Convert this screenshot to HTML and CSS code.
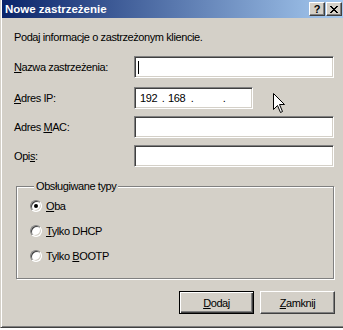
FILE: index.html
```html
<!DOCTYPE html>
<html lang="pl">
<head>
    <meta charset="UTF-8">
    <title>Nowe zastrzeżenie</title>
    <link rel="stylesheet" href="styles.css">
</head>
<body>
    <div class="window">
        <div class="titlebar">
            <span class="title">Nowe zastrzeżenie</span>
            <div class="title-buttons">
                <span class="tbtn help">?</span>
                <span class="tbtn close">
                    <svg width="8" height="7" viewBox="0 0 8 7"><path d="M0 0h2v1h1v1h2V1h1V0h2v1H7v1H6v1H5v1h1v1h1v1h1v1H6V6H5V5H3v1H2v1H0V6h1V5h1V4h1V3H2V2H1V1H0z" fill="#000"/></svg>
                </span>
            </div>
        </div>

        <div class="content">
            <p class="intro">Podaj informacje o zastrzeżonym kliencie.</p>

            <div class="form-row first">
                <label><u>N</u>azwa zastrzeżenia:</label>
                <div class="field wide"><span class="caret"></span></div>
            </div>
            <div class="form-row">
                <label><u>A</u>dres IP:</label>
                <div class="field ip">
                    <span class="oct o1">192</span><span class="dot">.</span><span class="oct o2">168</span><span class="dot">.</span><span class="oct o3"></span><span class="dot">.</span>
                </div>
            </div>
            <div class="form-row">
                <label>Adres <u>M</u>AC:</label>
                <div class="field wide"></div>
            </div>
            <div class="form-row">
                <label>Opi<u>s</u>:</label>
                <div class="field wide"></div>
            </div>

            <fieldset class="group">
                <legend>Obsługiwane typy</legend>
                <div class="radio"><span class="mark checked"></span><span><u>O</u>ba</span></div>
                <div class="radio"><span class="mark"></span><span><u>T</u>ylko DHCP</span></div>
                <div class="radio"><span class="mark"></span><span>Tylko <u>B</u>OOTP</span></div>
            </fieldset>

            <div class="actions">
                <button class="btn default"><u>D</u>odaj</button>
                <button class="btn"><u>Z</u>amknij</button>
            </div>
        </div>

        <svg class="pointer" width="13" height="21" viewBox="0 0 13 21">
            <path d="M0.5 0.5 L0.5 16.5 L4.5 12.5 L7.5 19.5 L9.5 18.5 L6.5 11.5 L11.5 11.5 Z" fill="#fff" stroke="#000" stroke-width="1"/>
        </svg>
    </div>
</body>
</html>
```

FILE: styles.css
```css
body {
    margin: 0;
    background-color: #fff;
    font-family: "Liberation Sans", Arial, sans-serif;
    font-size: 11px;
    letter-spacing: -0.4px;
    color: #000;
}

.window {
    position: relative;
    box-sizing: border-box;
    width: 343px;
    height: 328px;
    background-color: #d4d0c8;
    border-left: 1px solid #d4d0c8;
    border-bottom: 1px solid #404040;
    box-shadow: inset 1px 0 0 #fff, inset 0 -1px 0 #808080;
    overflow: hidden;
}

.titlebar {
    display: flex;
    align-items: center;
    justify-content: space-between;
    height: 18px;
    margin-left: 1px;
    padding: 0 1px 0 3px;
    background: linear-gradient(to right, #0a246a, #a6caf0);
}

.title {
    color: #fff;
    font-weight: bold;
    font-size: 11.5px;
    letter-spacing: 0;
}

.title-buttons {
    display: flex;
    gap: 1px;
}

.tbtn {
    box-sizing: border-box;
    display: flex;
    align-items: center;
    justify-content: center;
    width: 16px;
    height: 14px;
    background-color: #d4d0c8;
    border: 1px solid;
    border-color: #fff #404040 #404040 #fff;
    box-shadow: inset -1px -1px 0 #808080;
}

.help {
    font-weight: bold;
    font-size: 11px;
    letter-spacing: 0;
    line-height: 12px;
}

.content {
    padding: 0 9px 0 13px;
}

.intro {
    margin: 13px 0 12px;
    line-height: 13px;
}

.form-row {
    display: flex;
    align-items: center;
    margin-bottom: 7px;
}

.form-row.first {
    margin-bottom: 9px;
}

.form-row label {
    width: 120px;
}

.field {
    box-sizing: border-box;
    height: 22px;
    background-color: #fff;
    border: 1px solid;
    border-color: #808080 #fff #fff #808080;
    box-shadow: inset 1px 1px 0 #404040, inset -1px -1px 0 #d4d0c8;
    display: flex;
    align-items: center;
}

.field.wide {
    width: 200px;
}

.field.ip {
    width: 119px;
    padding-left: 5px;
}

.caret {
    width: 1px;
    height: 13px;
    margin-left: 3px;
    background-color: #000;
}

.oct.o1 { width: 21px; }
.oct.o2 { width: 22px; padding-left: 3px; }
.oct.o3 { width: 28px; }

.dot {
    width: 4px;
    text-align: center;
}

.group {
    margin: 13px 0 0 2px;
    padding: 6px 0 16px 13px;
    border: 1px solid #808080;
    box-shadow: inset 1px 1px 0 #fff, 1px 1px 0 #fff;
}

.group legend {
    margin-left: 4px;
    padding: 0 2px;
    line-height: 13px;
    background-color: #d4d0c8;
}

.radio {
    display: flex;
    align-items: center;
    gap: 4px;
    height: 13px;
    margin-bottom: 12px;
}

.radio:last-child {
    margin-bottom: 0;
}

.mark {
    position: relative;
    box-sizing: border-box;
    width: 12px;
    height: 12px;
    border-radius: 50%;
    background-color: #fff;
    border: 1px solid;
    border-color: #808080 #fff #fff #808080;
    box-shadow: inset 1px 1px 0 #404040, inset -1px -1px 0 #d4d0c8;
}

.mark.checked::after {
    content: "";
    position: absolute;
    left: 3px;
    top: 3px;
    width: 4px;
    height: 4px;
    border-radius: 50%;
    background-color: #000;
}

.actions {
    display: flex;
    justify-content: flex-end;
    gap: 6px;
    margin: 12px -1px 0 0;
}

.btn {
    box-sizing: border-box;
    width: 75px;
    height: 23px;
    padding: 0;
    font-family: inherit;
    font-size: 11px;
    letter-spacing: -0.4px;
    color: #000;
    background-color: #d4d0c8;
    border: 1px solid;
    border-color: #fff #404040 #404040 #fff;
    box-shadow: inset -1px -1px 0 #808080;
}

.btn.default {
    border-color: #000;
    box-shadow: inset 1px 1px 0 #fff, inset -1px -1px 0 #404040, inset -2px -2px 0 #808080;
}

.pointer {
    position: absolute;
    left: 272px;
    top: 93px;
}
```
